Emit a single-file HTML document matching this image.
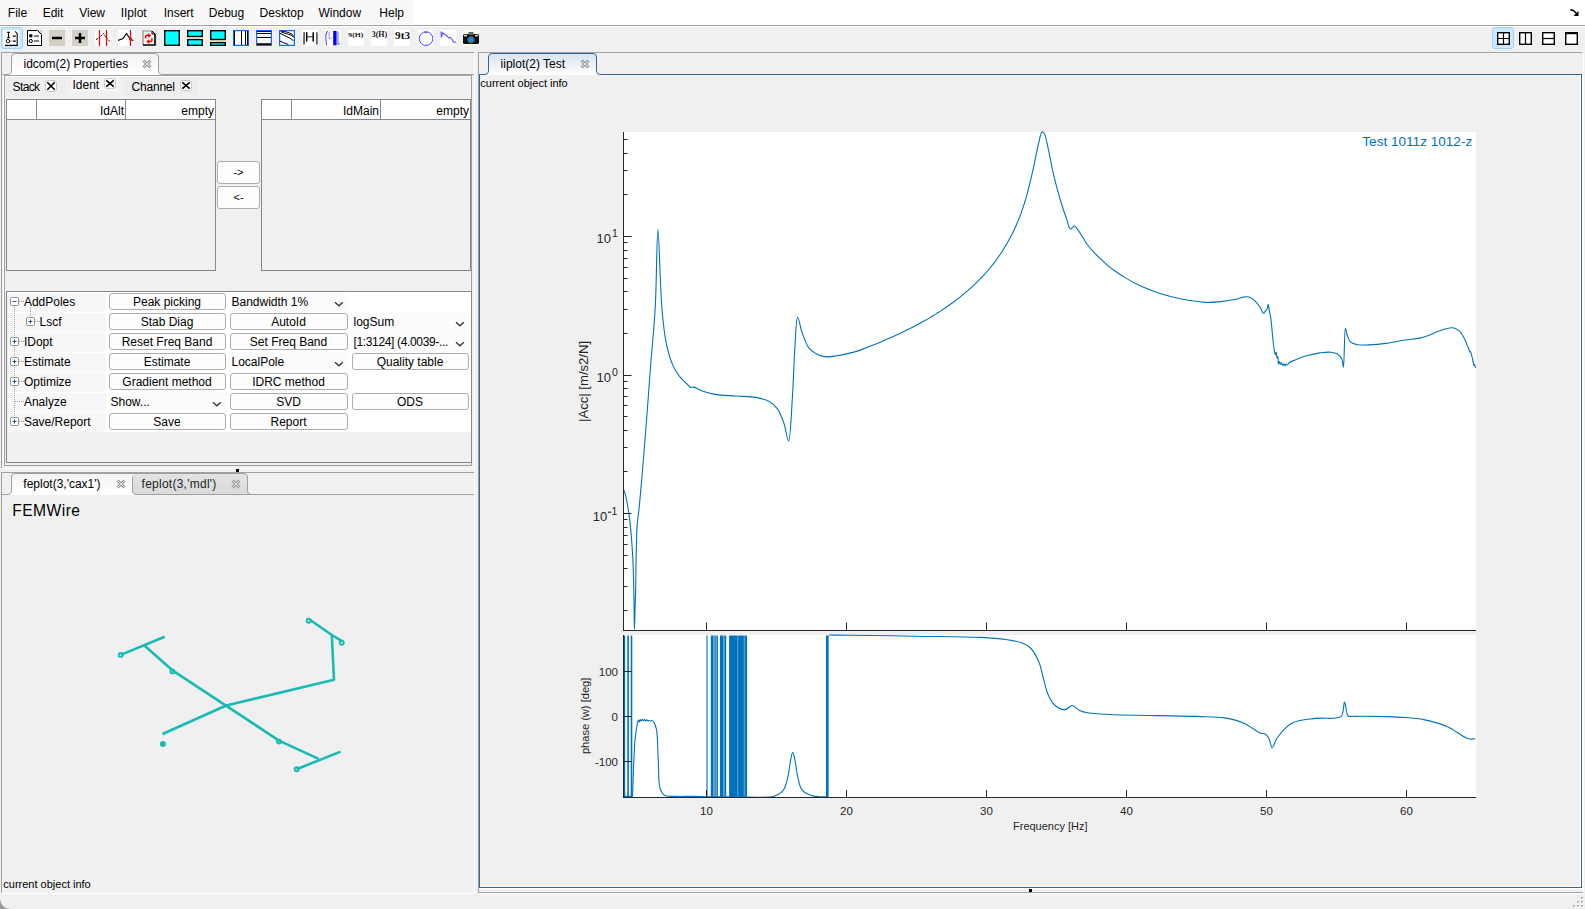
<!DOCTYPE html><html><head><meta charset="utf-8"><title>iiplot</title><style>
html,body{margin:0;padding:0}
body{width:1585px;height:909px;overflow:hidden;position:relative;background:#f0f0f0;font-family:"Liberation Sans",sans-serif;color:#000}
.a{position:absolute;box-sizing:border-box}
.t{position:absolute;white-space:nowrap;line-height:1}
.mi{position:absolute;top:5px;font-size:12px;line-height:14px}
.btn{position:absolute;box-sizing:border-box;border:1px solid #adadad;border-radius:3px;background:#fdfdfd;font-size:12px;text-align:center;line-height:14px;white-space:nowrap}
.cell{position:absolute;background:#f7f7f7}
.combo{position:absolute;font-size:12px;line-height:14px;white-space:nowrap}
.chev{position:absolute;width:6px;height:6px;border-right:1px solid #333;border-bottom:1px solid #333;transform:rotate(45deg)}
.xb{position:absolute;box-sizing:border-box;border:1px solid #c8c8c8;border-radius:3px;background:#fff}
</style></head><body>
<div class="a" style="left:0;top:0;width:1585px;height:25px;background:#fff"></div>
<div class="a" style="left:0;top:0;width:413px;height:24px;background:#f8f8f8"></div>
<div class="a" style="left:0;top:25px;width:1585px;height:1px;background:#a0a0a0"></div>
<div class="a" style="left:0;top:26px;width:1585px;height:1px;background:#fff"></div>
<div class="t" style="left:7.8px;top:6.64px;font-size:12px;">File</div>
<div class="t" style="left:42.7px;top:6.64px;font-size:12px;">Edit</div>
<div class="t" style="left:79.2px;top:6.64px;font-size:12px;">View</div>
<div class="t" style="left:120.7px;top:6.64px;font-size:12px;">IIplot</div>
<div class="t" style="left:163.7px;top:6.64px;font-size:12px;">Insert</div>
<div class="t" style="left:208.8px;top:6.64px;font-size:12px;">Debug</div>
<div class="t" style="left:259.6px;top:6.64px;font-size:12px;">Desktop</div>
<div class="t" style="left:318.4px;top:6.64px;font-size:12px;">Window</div>
<div class="t" style="left:379.3px;top:6.64px;font-size:12px;">Help</div>
<div class="a" style="left:1px;top:27px;width:22px;height:22px;background:#cce8ff;border:1px solid #99d1ff;border-radius:3px"></div>
<svg class="a" style="left:3px;top:30px;" width="16" height="16" viewBox="0 0 16 16"><rect width="16" height="16" fill="#fff"/><path d="M3.9,2.3H7.1M5.5,2.3V7.7M3.9,7.7H7.1" stroke="#000" stroke-width="1.1"/><path d="M9.9,6.1H12.8M9.9,11.1H12.8" stroke="#000" stroke-width="1.2"/><circle cx="4.9" cy="11.1" r="1.7" fill="none" stroke="#000" stroke-width="1"/><rect x="7.5" y="10.6" width="1" height="1" fill="#000"/><path d="M2,15.4H14.2V3.6L12.2,1.4" stroke="#000" stroke-width="1.1" fill="none"/></svg>
<svg class="a" style="left:26.8px;top:30px;" width="15" height="16" viewBox="0 0 15 16"><rect width="15" height="16" fill="#d4d0c8"/><path d="M0.5,15.5V0.5H10.5L14.5,4.5V15.5Z" fill="#fff" stroke="#000" stroke-width="1"/><circle cx="3.8" cy="5.8" r="1.8" fill="#000"/><circle cx="3.8" cy="11" r="1.6" fill="none" stroke="#000" stroke-width="1"/><path d="M7,6H12M7,11H12" stroke="#000" stroke-width="1.2"/></svg>
<svg class="a" style="left:48.9px;top:30px;" width="16" height="16" viewBox="0 0 16 16"><rect width="16" height="16" fill="#d4d0c8"/><path d="M3,8H13" stroke="#000" stroke-width="2.5"/></svg>
<svg class="a" style="left:71.9px;top:30px;" width="16" height="16" viewBox="0 0 16 16"><rect width="16" height="16" fill="#d4d0c8"/><path d="M3,8H13M8,3V13" stroke="#000" stroke-width="2.5"/></svg>
<svg class="a" style="left:95px;top:30px;" width="16" height="16" viewBox="0 0 16 16"><rect width="16" height="16" fill="#fff"/><path d="M1,9.5L4,8L8.5,3.5L11,7.5L15,11.5" stroke="#000" stroke-width="1" fill="none" stroke-dasharray="2,1"/><path d="M4.5,0V16M11.5,0V16" stroke="#f00" stroke-width="1.3"/></svg>
<svg class="a" style="left:118px;top:30px;" width="16" height="16" viewBox="0 0 16 16"><rect width="16" height="16" fill="#fff"/><path d="M0,10.5L5,8.5L8.5,3.5L12.5,9.5L15.5,10.5" stroke="#000" stroke-width="1.2" fill="none"/><path d="M12.5,0V16" stroke="#f00" stroke-width="1.3"/><circle cx="12.5" cy="9" r="1.5" fill="#f00"/></svg>
<svg class="a" style="left:141.7px;top:30px;" width="15" height="16" viewBox="0 0 15 16"><rect x="11" y="0" width="4" height="16" fill="#e6e2d8"/><path d="M1,15V1H10L13,4V15Z" fill="#f6f6f6"/><path d="M1,15V1H10" stroke="#8a8a8a" stroke-width="1.2" fill="none"/><path d="M1,15H13V4" stroke="#000" stroke-width="1.6" fill="none"/><path d="M10,1L13,4M10,1V4H13" stroke="#000" stroke-width="1" fill="none"/><path d="M3.6,8.6V6.4Q3.8,5.3 5,5.3H7" stroke="#f00" stroke-width="1.5" fill="none"/><path d="M6.3,3.1L9.3,5.5L6.3,7.7Z" fill="#f00"/><path d="M9.9,8.2V10.5Q9.8,11.5 8.6,11.5H6.5" stroke="#f00" stroke-width="1.5" fill="none"/><path d="M7.2,9.3L4.2,11.6L7.2,13.9Z" fill="#f00"/></svg>
<svg class="a" style="left:164px;top:30px;" width="16" height="16" viewBox="0 0 16 16"><rect x="0.7" y="0.7" width="14.6" height="14.6" fill="#0ff" stroke="#000" stroke-width="1.4"/></svg>
<svg class="a" style="left:186.8px;top:30px;" width="16" height="16" viewBox="0 0 16 16"><rect width="16" height="16" fill="#fff"/><rect x="0" y="7" width="16" height="2.5" fill="#fffacd"/><rect x="0.7" y="0.7" width="14.6" height="5.8" fill="#0ff" stroke="#000" stroke-width="1.4"/><rect x="0.7" y="9.6" width="14.6" height="5.7" fill="#0ff" stroke="#000" stroke-width="1.4"/></svg>
<svg class="a" style="left:209.9px;top:30px;" width="16" height="16" viewBox="0 0 16 16"><rect width="16" height="16" fill="#fff"/><rect x="0" y="10" width="16" height="2.5" fill="#fffacd"/><rect x="0.7" y="0.7" width="14.6" height="8.8" fill="#0ff" stroke="#000" stroke-width="1.4"/><rect x="0.7" y="12.6" width="14.6" height="2.7" fill="#0ff" stroke="#000" stroke-width="1.4"/></svg>
<svg class="a" style="left:233px;top:30px;" width="16" height="16" viewBox="0 0 16 16"><rect x="0.6" y="0.6" width="14.8" height="14.8" fill="#fff" stroke="#0a6cff" stroke-width="1.2"/><path d="M1.5,1V15M8.5,1V15M12.5,1V15M14.5,1V15" stroke="#000" stroke-width="1"/></svg>
<svg class="a" style="left:256.1px;top:30px;" width="16" height="16" viewBox="0 0 16 16"><rect x="0.6" y="0.6" width="14.8" height="14.8" fill="#fff" stroke="#0a6cff" stroke-width="1.2"/><path d="M1,1.5H15M1,3.5H15M1,7.5H15M1,14.5H15" stroke="#000" stroke-width="1"/><path d="M1,14H15" stroke="#000" stroke-width="1.5"/></svg>
<svg class="a" style="left:279.2px;top:30px;" width="16" height="16" viewBox="0 0 16 16"><rect x="0.6" y="0.6" width="14.8" height="14.8" fill="#fff" stroke="#0a6cff" stroke-width="1.2"/><g stroke="#000" stroke-width="1" fill="none"><path d="M1.6,1.1Q5.5,1.2 9.9,2.7T14.6,6.6"/><path d="M2.5,2.2Q7.7,3.8 12.5,5.3L14.6,7.4"/><path d="M0.7,3.1Q5.5,5.7 11.2,8.3L14.6,10.9"/><path d="M0.7,10.9L4.6,12.7L9.4,14.4"/></g></svg>
<svg class="a" style="left:302.2px;top:30px;" width="16" height="16" viewBox="0 0 16 16"><rect width="16" height="16" fill="#fff"/><path d="M2.1,2.2L2,14.4M14.9,2.2V14.4" stroke="#000" stroke-width="1.1"/><path d="M4.7,2.2V11.4M11.2,2.2V11.4" stroke="#000" stroke-width="1.5"/><path d="M4.7,6.8H11.2" stroke="#222" stroke-width="1"/></svg>
<svg class="a" style="left:325.3px;top:30px;" width="16" height="16" viewBox="0 0 16 16"><rect width="16" height="16" fill="#fff"/><path d="M2.5,0.9Q0.6,4 0.8,7Q1,11 1.6,15.3" stroke="#55f" stroke-width="1.1" fill="none"/><path d="M4.2,1.8V8.3H6.9" stroke="#8888ff" stroke-width="1" fill="none"/><rect x="8.2" y="0.9" width="3.4" height="14.4" fill="#00f"/><path d="M13,1.4V14.4L15.1,13.5" stroke="#66f" stroke-width="1.1" fill="none"/></svg>
<svg class="a" style="left:348px;top:30px;" width="16" height="16" viewBox="0 0 16 16"><rect width="16" height="16" fill="#fff"/><text x="0.3" y="6.8" font-family="Liberation Serif" font-size="7" font-weight="bold" fill="#111" textLength="15" lengthAdjust="spacingAndGlyphs">9(H)</text></svg>
<svg class="a" style="left:371.1px;top:30px;" width="16" height="16" viewBox="0 0 16 16"><rect width="16" height="16" fill="#fff"/><text x="0.7" y="7.2" font-family="Liberation Serif" font-size="7.5" font-weight="bold" fill="#111" textLength="15.4" lengthAdjust="spacingAndGlyphs">3(H)</text></svg>
<svg class="a" style="left:394.2px;top:30px;" width="16" height="16" viewBox="0 0 16 16"><rect width="16" height="16" fill="#fff"/><text x="1.1" y="8.9" font-family="Liberation Serif" font-weight="bold" font-size="9.5" fill="#111" textLength="14.9" lengthAdjust="spacingAndGlyphs">9t3</text></svg>
<svg class="a" style="left:416.9px;top:30px;" width="16" height="16" viewBox="0 0 16 16"><rect width="16" height="16" fill="#fff"/><circle cx="9" cy="8.6" r="6.8" fill="none" stroke="#44f" stroke-width="1"/><path d="M7.5,2Q9,4 10.5,2" stroke="#44f" stroke-width="1" fill="none"/></svg>
<svg class="a" style="left:439.9px;top:30px;" width="16" height="16" viewBox="0 0 16 16"><rect width="16" height="16" fill="#fff"/><path d="M0.9,1.4L1.4,7.4L2.6,2.8L4.8,4.5L7.1,5.7L8.3,7.9L10,7.4L12.2,9.6L13.4,11.9L15.9,12.5" stroke="#55f" stroke-width="1.1" fill="none"/></svg>
<svg class="a" style="left:462.9px;top:30px;" width="16" height="16" viewBox="0 0 16 16"><rect width="16" height="16" fill="#fffbea"/><rect x="0" y="4" width="16" height="10" rx="1.5" fill="#111"/><rect x="5.5" y="2" width="5" height="3" fill="#666"/><circle cx="8" cy="9.8" r="3.2" fill="#1c8ad6" stroke="#555" stroke-width="1"/><rect x="1" y="4.8" width="3" height="1.6" fill="#ddd"/><rect x="12" y="4.8" width="3" height="1.6" fill="#ddd"/></svg>
<div class="a" style="left:1492px;top:27px;width:22px;height:22px;background:#cce8ff;border:1px solid #99d1ff;border-radius:3px"></div>
<svg class="a" style="left:1497px;top:32px;" width="14" height="14" viewBox="0 0 14 14"><rect x="0.7" y="0.7" width="11.6" height="11.6" fill="#fff" stroke="#000" stroke-width="1.4"/><path d="M6.5,1V12.5M1,6.5H12.5" stroke="#000" stroke-width="1.2"/></svg>
<svg class="a" style="left:1519px;top:32px;" width="14" height="14" viewBox="0 0 14 14"><rect x="0.7" y="0.7" width="11.6" height="11.6" fill="#fff" stroke="#000" stroke-width="1.4"/><path d="M6.5,1V12.5" stroke="#000" stroke-width="1.2"/></svg>
<svg class="a" style="left:1542px;top:32px;" width="14" height="14" viewBox="0 0 14 14"><rect x="0.7" y="0.7" width="11.6" height="11.6" fill="#fff" stroke="#000" stroke-width="1.4"/><path d="M1,6.5H12.5" stroke="#000" stroke-width="1.2"/></svg>
<svg class="a" style="left:1565px;top:32px;" width="14" height="14" viewBox="0 0 14 14"><rect x="0.7" y="0.7" width="11.6" height="11.6" fill="#fff" stroke="#000" stroke-width="1.4"/><path d="M1,1.3H12.5" stroke="#000" stroke-width="1.8"/></svg>
<svg class="a" style="left:1569px;top:8px;" width="11" height="9" viewBox="0 0 11 9"><path d="M1.5,2.5Q3,1 5,3L8.5,6.5" stroke="#000" stroke-width="1.5" fill="none"/><path d="M9.5,3V8H4.5Z" fill="#000"/></svg>
<div class="a" style="left:1px;top:52px;width:473px;height:1px;background:#a0a0a0"></div>
<div class="a" style="left:1px;top:52px;width:1px;height:417px;background:#a0a0a0"></div>
<div class="a" style="left:474px;top:52px;width:1px;height:417px;background:#fff"></div>
<div class="a" style="left:1px;top:468px;width:474px;height:1px;background:#fff"></div>
<svg class="a" style="left:0;top:51px" width="476" height="26" viewBox="0 51 476 26"><defs><linearGradient id="tg1" x1="0" y1="0" x2="0" y2="1"><stop offset="0" stop-color="#f3f3f5"/><stop offset="1" stop-color="#ffffff"/></linearGradient></defs><path d="M8,75 Q11.5,75 11.5,71 V57 Q11.5,53.5 15,53.5 H155 Q158.5,53.5 158.5,57 V71 Q158.5,75 162,75 Z" fill="url(#tg1)"/><path d="M2,74.5 H8 Q11.5,74.5 11.5,71 V57 Q11.5,53.5 15,53.5 H155 Q158.5,53.5 158.5,57 V71 Q158.5,74.5 162,74.5 H474" fill="none" stroke="#a0a0a0" stroke-width="1"/></svg>
<div class="t" style="left:23.5px;top:58.34px;font-size:12px;">idcom(2) Properties</div>
<svg class="a" style="left:141.8px;top:58.8px" width="10" height="10"><path d="M1.5,1.5L8.5,8.5M8.5,1.5L1.5,8.5" stroke="#969696" stroke-width="2.9" fill="none"/><path d="M1.5,1.5L8.5,8.5M8.5,1.5L1.5,8.5" stroke="#f4f4f4" stroke-width="0.9" fill="none"/></svg>
<div class="a" style="left:4px;top:75px;width:1px;height:391px;background:#a0a0a0"></div>
<div class="a" style="left:4px;top:465px;width:468px;height:1px;background:#a0a0a0"></div>
<div class="a" style="left:471px;top:75px;width:1px;height:391px;background:#a0a0a0"></div>
<div class="a" style="left:3px;top:75px;width:1px;height:391px;background:#fff"></div>
<div class="a" style="left:4px;top:75px;width:468px;height:1px;background:#a0a0a0"></div>
<div class="a" style="left:5px;top:76px;width:466px;height:1px;background:#fff"></div>
<div class="a" style="left:6px;top:77px;width:59px;height:19px;background:#ededed"></div>
<div class="a" style="left:71px;top:77px;width:48px;height:15px;background:#f5f5f5"></div>
<div class="a" style="left:125px;top:77px;width:73px;height:19px;background:#ededed"></div>
<div class="t" style="left:12.5px;top:80.64px;font-size:12px;letter-spacing:-0.6px">Stack</div>
<div class="t" style="left:72.5px;top:78.74px;font-size:12px;">Ident</div>
<div class="t" style="left:131.5px;top:80.84px;font-size:12px;letter-spacing:-0.2px">Channel</div>
<div class="xb" style="left:45px;top:80px;width:12px;height:12px"></div>
<svg class="a" style="left:45px;top:80px" width="12" height="12"><path d="M2.3,2.3L9.7,9.7M9.7,2.3L2.3,9.7" stroke="#000" stroke-width="1.6"/></svg>
<div class="xb" style="left:104px;top:78px;width:12px;height:11px"></div>
<svg class="a" style="left:104px;top:78px" width="12" height="11"><path d="M2.3,2.3L9.7,8.7M9.7,2.3L2.3,8.7" stroke="#000" stroke-width="1.6"/></svg>
<div class="xb" style="left:180px;top:80px;width:12px;height:11px"></div>
<svg class="a" style="left:180px;top:80px" width="12" height="11"><path d="M2.3,2.3L9.7,8.7M9.7,2.3L2.3,8.7" stroke="#000" stroke-width="1.6"/></svg>
<div class="a" style="left:6px;top:99px;width:210px;height:172px;border:1px solid #828790;background:#f0f0f0"></div>
<div class="a" style="left:7px;top:100px;width:208px;height:19px;background:#fff"></div>
<div class="a" style="left:6px;top:119px;width:210px;height:1px;background:#828790"></div>
<div class="a" style="left:36px;top:99px;width:1px;height:21px;background:#828790"></div>
<div class="a" style="left:125px;top:99px;width:1px;height:21px;background:#828790"></div>
<div class="t" style="left:37px;top:104.64px;width:87px;text-align:right;font-size:12px">IdAlt</div>
<div class="t" style="left:126px;top:104.64px;width:88px;text-align:right;font-size:12px">empty</div>
<div class="a" style="left:261px;top:99px;width:210px;height:172px;border:1px solid #828790;background:#f0f0f0"></div>
<div class="a" style="left:262px;top:100px;width:208px;height:19px;background:#fff"></div>
<div class="a" style="left:261px;top:119px;width:210px;height:1px;background:#828790"></div>
<div class="a" style="left:291px;top:99px;width:1px;height:21px;background:#828790"></div>
<div class="a" style="left:380px;top:99px;width:1px;height:21px;background:#828790"></div>
<div class="t" style="left:292px;top:104.64px;width:87px;text-align:right;font-size:12px">IdMain</div>
<div class="t" style="left:381px;top:104.64px;width:88px;text-align:right;font-size:12px">empty</div>
<div class="btn" style="left:217px;top:161px;width:43px;height:23px;line-height:21px;font-size:11px">-&gt;</div>
<div class="btn" style="left:217px;top:186px;width:43px;height:23px;line-height:21px;font-size:11px">&lt;-</div>
<div class="a" style="left:6px;top:291px;width:466px;height:172px;border:1px solid #828790;background:#f0f0f0"></div>
<div class="a" style="left:7px;top:292px;width:464px;height:1px;background:#fff"></div>
<div class="a" style="left:8px;top:293px;width:463px;height:139px;background:#fff"></div>
<div class="cell" style="left:8px;top:293px;width:98px;height:19px"></div>
<div class="cell" style="left:8px;top:313px;width:98px;height:19px"></div>
<div class="cell" style="left:8px;top:333px;width:98px;height:19px"></div>
<div class="cell" style="left:8px;top:353px;width:98px;height:19px"></div>
<div class="cell" style="left:8px;top:373px;width:98px;height:19px"></div>
<div class="cell" style="left:8px;top:393px;width:98px;height:19px"></div>
<div class="cell" style="left:8px;top:413px;width:98px;height:19px"></div>
<div class="t" style="left:23.9px;top:296.14px;font-size:12px;">AddPoles</div>
<div class="btn" style="left:108.5px;top:293px;width:117px;height:17px;line-height:15px;padding-top:0.8px">Peak picking</div>
<div class="a" style="left:228.5px;top:293px;width:119px;height:19px;background:#fbfbfb"></div>
<div class="t" style="left:231.5px;top:296.34px;font-size:12px;">Bandwidth 1%</div>
<svg class="a" style="left:334px;top:301px" width="10" height="6"><path d="M1,1.2L4.9,4.8L8.8,1.2" stroke="#333" stroke-width="1.3" fill="none"/></svg>
<div class="t" style="left:39.6px;top:316.14px;font-size:12px;">Lscf</div>
<div class="btn" style="left:108.5px;top:313px;width:117px;height:17px;line-height:15px;padding-top:0.8px">Stab Diag</div>
<div class="btn" style="left:229.5px;top:313px;width:118px;height:17px;line-height:15px;padding-top:0.8px">AutoId</div>
<div class="a" style="left:350.5px;top:313px;width:118px;height:19px;background:#fbfbfb"></div>
<div class="t" style="left:353.5px;top:316.34px;font-size:12px;">logSum</div>
<svg class="a" style="left:455px;top:321px" width="10" height="6"><path d="M1,1.2L4.9,4.8L8.8,1.2" stroke="#333" stroke-width="1.3" fill="none"/></svg>
<div class="t" style="left:23.9px;top:336.14px;font-size:12px;">IDopt</div>
<div class="btn" style="left:108.5px;top:333px;width:117px;height:17px;line-height:15px;padding-top:0.8px">Reset Freq Band</div>
<div class="btn" style="left:229.5px;top:333px;width:118px;height:17px;line-height:15px;padding-top:0.8px">Set Freq Band</div>
<div class="a" style="left:350.5px;top:333px;width:118px;height:19px;background:#fbfbfb"></div>
<div class="t" style="left:353.5px;top:336.34px;font-size:12px;letter-spacing:-0.35px">[1:3124] (4.0039-...</div>
<svg class="a" style="left:455px;top:341px" width="10" height="6"><path d="M1,1.2L4.9,4.8L8.8,1.2" stroke="#333" stroke-width="1.3" fill="none"/></svg>
<div class="t" style="left:23.9px;top:356.14px;font-size:12px;">Estimate</div>
<div class="btn" style="left:108.5px;top:353px;width:117px;height:17px;line-height:15px;padding-top:0.8px">Estimate</div>
<div class="a" style="left:228.5px;top:353px;width:119px;height:19px;background:#fbfbfb"></div>
<div class="t" style="left:231.5px;top:356.34px;font-size:12px;">LocalPole</div>
<svg class="a" style="left:334px;top:361px" width="10" height="6"><path d="M1,1.2L4.9,4.8L8.8,1.2" stroke="#333" stroke-width="1.3" fill="none"/></svg>
<div class="btn" style="left:351.5px;top:353px;width:117px;height:17px;line-height:15px;padding-top:0.8px">Quality table</div>
<div class="t" style="left:23.9px;top:376.14px;font-size:12px;">Optimize</div>
<div class="btn" style="left:108.5px;top:373px;width:117px;height:17px;line-height:15px;padding-top:0.8px">Gradient method</div>
<div class="btn" style="left:229.5px;top:373px;width:118px;height:17px;line-height:15px;padding-top:0.8px">IDRC method</div>
<div class="t" style="left:23.9px;top:396.14px;font-size:12px;">Analyze</div>
<div class="a" style="left:107.5px;top:393px;width:118px;height:19px;background:#fbfbfb"></div>
<div class="t" style="left:110.5px;top:396.34px;font-size:12px;">Show...</div>
<svg class="a" style="left:212px;top:401px" width="10" height="6"><path d="M1,1.2L4.9,4.8L8.8,1.2" stroke="#333" stroke-width="1.3" fill="none"/></svg>
<div class="btn" style="left:229.5px;top:393px;width:118px;height:17px;line-height:15px;padding-top:0.8px">SVD</div>
<div class="btn" style="left:351.5px;top:393px;width:117px;height:17px;line-height:15px;padding-top:0.8px">ODS</div>
<div class="t" style="left:23.9px;top:416.14px;font-size:12px;">Save/Report</div>
<div class="btn" style="left:108.5px;top:413px;width:117px;height:17px;line-height:15px;padding-top:0.8px">Save</div>
<div class="btn" style="left:229.5px;top:413px;width:118px;height:17px;line-height:15px;padding-top:0.8px">Report</div>
<svg class="a" style="left:8px;top:293px" width="100" height="140"><g stroke="#a0a0a0" stroke-width="1" stroke-dasharray="1,1" fill="none"><path d="M6.5,14V128M11,8.5H16M6.5,8.5H6.5M22.5,14V28.5M27,28.5H32M11,48.5H16M11,68.5H16M11,88.5H16M7,108.5H16M11,128.5H16"/></g><g fill="#fff" stroke="#919191"><rect x="2.5" y="4.5" width="8" height="8" rx="1"/><rect x="18.5" y="24.5" width="8" height="8" rx="1"/><rect x="2.5" y="44.5" width="8" height="8" rx="1"/><rect x="2.5" y="64.5" width="8" height="8" rx="1"/><rect x="2.5" y="84.5" width="8" height="8" rx="1"/><rect x="2.5" y="124.5" width="8" height="8" rx="1"/></g><g stroke="#2c4c8c" stroke-width="1"><path d="M4.5,8.5H8.5M20.5,28.5H24.5M22.5,26.5V30.5M4.5,48.5H8.5M6.5,46.5V50.5M4.5,68.5H8.5M6.5,66.5V70.5M4.5,88.5H8.5M6.5,86.5V90.5M4.5,128.5H8.5M6.5,126.5V130.5"/></g></svg>
<div class="a" style="left:236px;top:469px;width:3px;height:3px;background:#000"></div>
<div class="a" style="left:1px;top:472px;width:473px;height:1px;background:#a0a0a0"></div>
<div class="a" style="left:1px;top:472px;width:1px;height:421px;background:#a0a0a0"></div>
<div class="a" style="left:474px;top:472px;width:1px;height:421px;background:#fff"></div>
<div class="a" style="left:1px;top:893px;width:474px;height:1px;background:#fff"></div>
<svg class="a" style="left:0;top:470px" width="474" height="28" viewBox="0 470 474 28"><defs><linearGradient id="gsel" x1="0" y1="0" x2="0" y2="1"><stop offset="0" stop-color="#f3f3f5"/><stop offset="1" stop-color="#fff"/></linearGradient><linearGradient id="gun" x1="0" y1="0" x2="0" y2="1"><stop offset="0" stop-color="#e3e3e3"/><stop offset="1" stop-color="#dadada"/></linearGradient></defs><path fill="url(#gun)" d="M132.5,477 Q132.5,473.5 136,473.5 H244 Q247.5,473.5 247.5,477 V491 Q247.5,494.5 251,494.5 H136 Q132.5,494.5 132.5,491 Z"/><path fill="url(#gsel)" d="M8,495 Q11.5,495 11.5,491 V477 Q11.5,473.5 15,473.5 H129 Q132.5,473.5 132.5,477 V491 Q132.5,495 136,495 Z"/><path fill="none" stroke="#a0a0a0" d="M2,494.5 H8 Q11.5,494.5 11.5,491 V477 Q11.5,473.5 15,473.5 H244 Q247.5,473.5 247.5,477 V491 Q247.5,494.5 251,494.5 H474 M132.5,477 V491 Q132.5,494.5 136,494.5 H251"/></svg>
<div class="t" style="left:23.3px;top:478.44px;font-size:12px;">feplot(3,'cax1')</div>
<div class="t" style="left:141.6px;top:478.44px;font-size:12px;color:#222;letter-spacing:0.25px">feplot(3,'mdl')</div>
<svg class="a" style="left:115.8px;top:478.8px" width="10" height="10"><path d="M1.5,1.5L8.5,8.5M8.5,1.5L1.5,8.5" stroke="#969696" stroke-width="2.9" fill="none"/><path d="M1.5,1.5L8.5,8.5M8.5,1.5L1.5,8.5" stroke="#f4f4f4" stroke-width="0.9" fill="none"/></svg>
<svg class="a" style="left:230.8px;top:478.8px" width="10" height="10"><path d="M1.5,1.5L8.5,8.5M8.5,1.5L1.5,8.5" stroke="#969696" stroke-width="2.9" fill="none"/><path d="M1.5,1.5L8.5,8.5M8.5,1.5L1.5,8.5" stroke="#f4f4f4" stroke-width="0.9" fill="none"/></svg>
<div class="t" style="left:12.3px;top:502.69px;font-size:15.6px;letter-spacing:0.45px">FEMWire</div>
<div class="t" style="left:3.3px;top:879.39px;font-size:11px;">current object info</div>
<svg class="a" style="left:0;top:495px" width="474" height="398" viewBox="0 495 474 398"><g stroke="#18bab5" stroke-width="2.6" fill="none" stroke-linecap="butt" stroke-linejoin="round"><path d="M120.7,654.9L164.7,636.8"/><path d="M143.8,645L172.4,670.3L279,740.6L318.6,758.9"/><path d="M296.6,769.2L340.6,751.6"/><path d="M162.5,734L226.2,705.5L334,679.7L331.8,635L309.8,619.7"/><path d="M331.8,635L342.8,641.7"/></g><g stroke="#18bab5" stroke-width="1.9" fill="none"><circle cx="120.7" cy="654.9" r="2"/><circle cx="172.4" cy="671.4" r="2"/><circle cx="279" cy="741.6" r="2"/><circle cx="296.6" cy="769.2" r="2"/><circle cx="308.7" cy="620.8" r="2"/><circle cx="341.7" cy="642.8" r="2"/></g><circle cx="162.9" cy="744" r="3" fill="#18bab5"/></svg>
<div class="a" style="left:478px;top:52px;width:1104px;height:1px;background:#a0a0a0"></div>
<div class="a" style="left:478px;top:52px;width:1px;height:841px;background:#a0a0a0"></div>
<div class="a" style="left:1583px;top:52px;width:1px;height:841px;background:#fff"></div>
<div class="a" style="left:478px;top:892px;width:1105px;height:1px;background:#a0a0a0"></div>
<div class="a" style="left:478px;top:893px;width:1105px;height:1px;background:#fff"></div>
<div class="a" style="left:479px;top:74px;width:1103px;height:814px;border:1px solid #33649c;border-top:none"></div>
<div class="a" style="left:480px;top:75px;width:1101px;height:812px;border:1px solid #fff;border-top:none;border-left:none"></div>
<div class="a" style="left:1582px;top:74px;width:1px;height:815px;background:#fff"></div>
<div class="a" style="left:479px;top:888px;width:1104px;height:1px;background:#fff"></div>
<svg class="a" style="left:0;top:51px" width="1584" height="26" viewBox="0 51 1584 26"><defs><linearGradient id="tg2" x1="0" y1="0" x2="0" y2="1"><stop offset="0" stop-color="#d8e2ec"/><stop offset="1" stop-color="#ffffff"/></linearGradient></defs><path d="M485,75 Q488.5,75 488.5,71 V57 Q488.5,53.5 492,53.5 H593 Q596.5,53.5 596.5,57 V71 Q596.5,75 600,75 Z" fill="url(#tg2)"/><path d="M479,74.5 H485 Q488.5,74.5 488.5,71 V57 Q488.5,53.5 492,53.5 H593 Q596.5,53.5 596.5,57 V71 Q596.5,74.5 600,74.5 H1582" fill="none" stroke="#33649c" stroke-width="1"/></svg>
<div class="t" style="left:500.6px;top:58.34px;font-size:12px;">iiplot(2) Test</div>
<svg class="a" style="left:579.8px;top:58.8px" width="10" height="10"><path d="M1.5,1.5L8.5,8.5M8.5,1.5L1.5,8.5" stroke="#969696" stroke-width="2.9" fill="none"/><path d="M1.5,1.5L8.5,8.5M8.5,1.5L1.5,8.5" stroke="#f4f4f4" stroke-width="0.9" fill="none"/></svg>
<div class="t" style="left:480.3px;top:78.49px;font-size:11px;">current object info</div>
<svg class="a" style="left:0;top:0" width="1585" height="909" viewBox="0 0 1585 909"><rect x="623" y="132" width="853" height="498.5" fill="#fff"/><rect x="623" y="635" width="853" height="162" fill="#fff"/><path d="M623.5,489.6 C623.9,490.5 624.3,491.1 624.7,492.4 C625.6,495.1 626.7,500.4 627.5,505.0 C628.5,510.3 629.2,515.6 630.0,522.4 C631.1,532.1 632.1,545.6 632.8,557.9 C633.5,571.3 633.7,587.2 634.0,600.0 C634.2,610.7 634.2,629.5 634.4,629.5 C634.6,629.5 634.8,616.4 635.0,610.0 C635.2,603.8 635.4,599.6 635.6,591.6 C636.0,576.5 636.1,540.8 637.1,526.1 C637.6,518.7 638.3,516.1 639.0,509.3 C640.1,498.6 641.4,482.9 642.7,468.0 C644.2,450.3 645.9,428.3 647.3,410.0 C648.6,393.6 649.5,379.4 650.8,363.2 C652.2,345.6 654.1,328.0 655.2,308.0 C656.6,284.1 656.8,229.3 657.9,229.3 C659.0,229.3 660.1,287.0 661.9,308.0 C663.1,322.1 664.1,333.0 666.3,343.3 C668.0,351.6 670.3,359.4 672.9,365.4 C674.9,369.8 677.0,373.2 679.5,376.4 C681.8,379.3 685.0,382.0 687.0,384.0 C688.4,385.4 689.2,387.0 690.5,387.4 C691.5,387.8 692.5,386.9 693.8,387.1 C695.9,387.5 698.6,389.7 701.6,390.8 C705.4,392.2 709.8,393.5 714.8,394.4 C721.0,395.5 729.2,395.5 736.2,396.0 C742.9,396.5 750.1,396.3 756.0,397.4 C760.9,398.3 765.5,399.4 769.2,401.5 C772.5,403.4 775.2,405.7 777.5,408.9 C780.3,412.8 782.3,418.6 784.1,423.8 C786.0,429.3 787.3,441.2 788.5,441.1 C790.4,441.0 791.3,413.6 792.3,399.0 C793.4,383.2 793.8,364.2 794.8,349.5 C795.6,337.6 796.0,317.5 797.6,317.3 C798.8,317.2 800.3,327.9 802.2,333.0 C804.1,338.1 806.2,344.4 808.8,347.9 C810.7,350.3 812.8,351.6 815.0,353.0 C817.2,354.3 819.7,355.5 822.0,356.1 C824.1,356.7 826.1,356.9 828.3,356.9 C830.9,356.9 833.6,356.3 836.5,355.8 C839.9,355.2 843.9,354.4 847.5,353.6 C851.1,352.8 855.0,351.8 858.0,350.9 C860.3,350.2 862.0,349.5 864.0,348.7 C866.0,347.9 868.0,347.1 870.0,346.3 C872.0,345.5 874.0,344.7 876.0,343.9 C878.0,343.1 880.0,342.2 882.0,341.4 C884.0,340.5 886.0,339.7 888.0,338.8 C890.0,337.9 892.0,337.1 894.0,336.2 C896.0,335.3 898.0,334.3 900.0,333.4 C902.0,332.4 904.0,331.5 906.0,330.5 C908.0,329.5 910.0,328.5 912.0,327.5 C914.0,326.5 916.0,325.4 918.0,324.3 C920.0,323.2 922.0,322.1 924.0,321.0 C926.0,319.9 928.0,318.8 930.0,317.6 C932.0,316.4 934.0,315.1 936.0,313.9 C938.0,312.6 940.0,311.4 942.0,310.1 C944.0,308.8 946.0,307.4 948.0,306.0 C950.0,304.6 952.0,303.2 954.0,301.7 C956.0,300.2 958.0,298.7 960.0,297.1 C962.0,295.5 964.0,293.9 966.0,292.2 C968.0,290.5 970.0,288.7 972.0,286.9 C974.0,285.1 976.0,283.2 978.0,281.2 C980.0,279.2 982.0,277.1 984.0,274.9 C986.0,272.7 988.0,270.4 990.0,268.0 C992.0,265.5 994.0,263.0 996.0,260.3 C998.0,257.5 999.9,254.9 1002.0,251.7 C1004.5,247.7 1007.6,242.6 1010.0,238.1 C1012.2,233.9 1014.2,229.9 1016.0,225.7 C1017.8,221.6 1019.4,217.7 1021.0,213.4 C1022.8,208.6 1024.3,204.0 1026.0,198.2 C1028.2,190.5 1030.6,180.4 1032.7,171.2 C1034.9,161.7 1037.0,149.2 1038.9,142.0 C1040.0,137.7 1040.7,132.4 1042.0,131.9 C1042.7,131.7 1043.6,132.5 1044.3,133.5 C1045.9,135.8 1046.8,142.5 1048.1,148.1 C1049.8,155.5 1051.4,165.6 1053.5,174.3 C1055.6,183.1 1058.1,192.6 1060.5,200.5 C1062.5,207.2 1064.7,213.8 1066.6,219.0 C1068.0,222.9 1068.8,228.6 1070.5,229.0 C1071.6,229.3 1073.0,225.9 1074.3,226.0 C1075.9,226.1 1077.3,229.2 1079.0,231.4 C1081.4,234.6 1084.0,240.0 1086.7,243.7 C1089.2,247.1 1092.0,250.3 1094.4,252.9 C1096.4,255.0 1097.7,256.2 1100.0,258.3 C1103.4,261.5 1108.7,266.4 1113.2,269.8 C1117.5,273.0 1121.9,275.7 1126.4,278.4 C1130.7,281.0 1135.1,283.5 1139.6,285.6 C1143.9,287.6 1148.4,289.3 1152.8,290.9 C1157.2,292.5 1161.6,293.9 1166.0,295.2 C1170.4,296.5 1174.8,297.6 1179.2,298.5 C1183.6,299.4 1188.0,300.1 1192.4,300.8 C1196.8,301.4 1200.9,302.2 1205.5,302.4 C1210.4,302.6 1215.8,302.1 1220.9,301.6 C1226.0,301.1 1231.9,300.2 1236.3,299.3 C1239.6,298.6 1242.4,297.1 1245.0,296.9 C1247.0,296.7 1248.7,296.7 1250.4,297.4 C1252.3,298.2 1254.2,300.2 1255.8,301.8 C1257.3,303.3 1258.6,305.0 1259.8,306.8 C1261.1,308.8 1262.1,313.0 1263.3,313.2 C1264.1,313.3 1265.0,311.5 1265.7,310.7 C1266.3,310.0 1266.8,309.6 1267.2,308.8 C1267.7,307.7 1267.9,304.3 1268.2,304.3 C1268.6,304.3 1268.8,307.8 1269.2,309.8 C1269.6,312.2 1270.3,315.0 1270.7,317.7 C1271.1,320.6 1271.4,323.5 1271.7,326.6 C1272.1,330.0 1272.3,333.8 1272.7,337.5 C1273.1,341.4 1273.6,346.2 1274.2,349.4 C1274.6,351.6 1275.1,355.0 1275.5,355.0 C1275.8,355.0 1276.1,352.0 1276.3,352.0 C1276.6,352.0 1276.6,357.9 1277.0,358.0 C1277.2,358.0 1277.6,356.5 1277.8,356.5 C1278.3,356.6 1278.1,363.9 1278.5,364.0 C1278.8,364.0 1279.2,361.5 1279.5,361.5 C1279.8,361.5 1280.1,364.4 1280.5,364.5 C1280.8,364.5 1281.2,362.8 1281.6,362.8 C1282.0,362.8 1282.4,365.5 1282.8,365.5 C1283.2,365.5 1283.6,363.8 1284.0,363.8 C1284.4,363.8 1284.6,366.0 1285.0,366.0 C1285.4,366.0 1285.8,364.1 1286.3,364.0 C1286.7,363.9 1287.1,364.9 1287.5,364.8 C1288.1,364.7 1288.6,363.2 1289.5,362.5 C1290.7,361.6 1292.5,361.0 1294.5,360.2 C1297.6,358.9 1302.4,357.0 1306.5,355.8 C1310.8,354.6 1315.5,353.5 1319.8,352.9 C1323.7,352.4 1328.0,351.8 1331.2,352.2 C1333.6,352.5 1335.6,352.9 1337.4,354.0 C1339.2,355.1 1340.8,356.9 1341.8,358.9 C1342.9,361.2 1342.9,367.3 1343.4,367.3 C1344.4,367.2 1344.2,328.5 1345.4,328.4 C1345.9,328.4 1346.3,332.8 1347.1,335.0 C1348.0,337.4 1348.9,340.5 1350.7,342.1 C1352.5,343.7 1355.1,344.2 1357.7,344.7 C1360.8,345.3 1364.3,345.0 1368.3,344.9 C1373.5,344.7 1380.1,344.2 1386.0,343.4 C1391.9,342.6 1397.9,341.2 1403.7,340.3 C1409.2,339.4 1415.6,339.0 1420.0,338.1 C1423.1,337.4 1425.0,336.8 1427.7,335.8 C1430.8,334.7 1434.4,332.8 1437.7,331.6 C1440.8,330.4 1444.2,329.1 1446.9,328.5 C1448.9,328.0 1450.8,327.6 1452.3,327.7 C1453.5,327.8 1454.3,328.0 1455.4,328.5 C1456.8,329.1 1458.7,330.3 1460.0,331.6 C1461.3,332.9 1462.1,334.5 1463.1,336.2 C1464.2,338.1 1465.4,340.4 1466.2,342.3 C1466.8,343.8 1467.0,345.6 1467.5,346.5 C1467.8,347.0 1468.2,347.0 1468.5,347.5 C1469.0,348.4 1469.1,351.8 1469.6,352.0 C1469.9,352.1 1470.2,351.4 1470.5,351.5 C1471.0,351.7 1471.2,354.0 1471.6,355.4 C1472.0,356.9 1472.4,358.4 1472.8,360.0 C1473.2,361.7 1473.4,365.3 1473.9,365.4 C1474.1,365.4 1474.4,364.5 1474.6,364.5 C1475.0,364.6 1475.2,366.9 1475.5,368.1" fill="none" stroke="#0072bd" stroke-width="1.1" stroke-linejoin="round"/><path d="M624.2,635.5V796.5" stroke="#0072bd" stroke-width="2"/><path d="M628.1,635.5V796.5" stroke="#0072bd" stroke-width="1.6"/><path d="M631.5,635.5V796.5" stroke="#0072bd" stroke-width="1.6"/><path d="M623.5,796.5L632.5,796.5" stroke="#0072bd" stroke-width="1.5"/><path d="M632.5,796.5 C633.3,777.8 633.7,754.0 635.0,740.3 C635.8,732.4 636.9,724.4 637.8,721.6 C638.1,720.7 638.3,720.0 638.6,720.0 C638.9,720.0 639.1,722.0 639.4,722.0 C639.7,722.0 640.0,719.5 640.3,719.5 C640.6,719.5 640.9,721.0 641.2,721.0 C641.6,721.0 642.0,719.2 642.4,719.2 C642.8,719.2 643.1,720.8 643.5,720.8 C643.9,720.8 644.2,719.6 644.6,719.6 C645.0,719.6 645.4,720.9 645.8,720.9 C646.2,720.9 646.6,719.8 647.0,719.8 C647.4,719.8 647.6,720.9 648.0,721.0 C648.4,721.1 648.9,720.2 649.3,720.2 C649.7,720.2 650.1,721.3 650.5,721.3 C650.9,721.3 651.3,720.5 651.8,720.5 C652.4,720.5 653.0,721.1 653.6,721.9 C654.6,723.3 655.7,725.8 656.4,729.1 C657.9,735.8 657.6,750.6 658.3,760.8 C658.9,770.5 658.1,783.0 660.2,788.9 C661.3,792.1 662.6,794.1 664.9,795.4 C667.6,796.9 671.9,796.2 676.0,796.4 C681.0,796.6 687.6,796.3 692.9,796.4 C697.5,796.5 701.6,796.6 706.0,796.7" fill="none" stroke="#0072bd" stroke-width="1.1"/><rect x="706.2" y="635.5" width="1.7" height="161.5" fill="#5aa0d6"/><rect x="710.8" y="635.5" width="2.3" height="161.5" fill="#0072bd"/><rect x="713.1" y="635.5" width="1.5" height="161.5" fill="#4d98d2"/><rect x="714.6" y="635.5" width="1.2" height="161.5" fill="#0072bd"/><rect x="715.8" y="635.5" width="0.8" height="161.5" fill="#4d98d2"/><rect x="716.6" y="635.5" width="1.3" height="161.5" fill="#0072bd"/><rect x="719.9" y="635.5" width="3.2" height="161.5" fill="#0072bd"/><rect x="723.1" y="635.5" width="1.9" height="161.5" fill="#4d98d2"/><rect x="725" y="635.5" width="1.2" height="161.5" fill="#0072bd"/><rect x="729.1" y="635.5" width="7.9" height="161.5" fill="#0072bd"/><rect x="737" y="635.5" width="1.1" height="161.5" fill="#4d98d2"/><rect x="738.1" y="635.5" width="5.8" height="161.5" fill="#0072bd"/><rect x="743.9" y="635.5" width="1.2" height="161.5" fill="#4d98d2"/><rect x="745.1" y="635.5" width="1.9" height="161.5" fill="#0072bd"/><path d="M706,796.7H747" stroke="#0072bd" stroke-width="1.1"/><path d="M747.0,797.0 C755.9,796.8 767.2,798.3 773.6,796.4 C777.7,795.2 780.7,793.5 783.0,790.7 C785.6,787.5 786.5,782.4 787.7,777.7 C789.1,772.5 789.5,765.4 790.5,760.8 C791.2,757.5 791.9,752.4 792.7,752.4 C793.5,752.4 794.4,757.5 795.1,760.8 C796.1,765.4 796.5,772.5 797.9,777.7 C799.1,782.4 799.7,787.6 802.6,790.7 C805.4,793.8 810.7,795.4 814.8,796.4 C818.5,797.3 822.3,796.7 826.0,796.9" fill="none" stroke="#0072bd" stroke-width="1.1"/><path d="M828.8,635.0 C835.9,635.1 841.0,635.1 850.0,635.2 C865.9,635.4 893.7,635.8 915.6,636.2 C937.5,636.6 964.6,636.5 981.2,637.4 C991.4,637.9 998.5,638.4 1005.8,639.5 C1011.9,640.4 1017.8,641.3 1022.2,643.1 C1025.5,644.4 1027.9,645.6 1030.4,648.0 C1033.6,651.1 1036.4,656.3 1038.6,661.2 C1041.0,666.6 1041.9,673.3 1043.6,679.2 C1045.2,684.8 1046.3,691.0 1048.5,695.6 C1050.3,699.5 1052.2,703.2 1055.0,705.5 C1057.7,707.7 1061.9,709.8 1064.9,709.6 C1067.6,709.4 1069.9,705.4 1072.3,705.5 C1074.8,705.6 1077.1,709.2 1079.7,710.4 C1082.3,711.6 1084.5,712.2 1087.9,712.8 C1093.4,713.8 1100.2,714.0 1110.0,714.5 C1129.3,715.5 1174.9,715.6 1195.9,716.4 C1208.1,716.9 1216.1,716.5 1224.7,717.9 C1231.8,719.1 1237.9,720.6 1243.9,723.2 C1249.8,725.7 1256.6,731.8 1260.6,733.2 C1262.6,733.9 1264.0,733.1 1265.4,733.9 C1266.9,734.8 1268.0,736.8 1269.0,738.7 C1270.3,741.1 1270.8,747.5 1272.1,747.6 C1273.5,747.7 1274.8,741.0 1277.4,737.5 C1280.8,732.9 1285.8,726.4 1291.8,723.2 C1298.4,719.7 1307.7,719.5 1315.8,718.4 C1324.1,717.2 1336.5,720.2 1341.0,716.4 C1344.4,713.5 1343.3,702.1 1344.5,702.1 C1345.7,702.1 1346.1,714.3 1348.1,716.0 C1349.2,716.9 1350.3,716.2 1352.0,716.3 C1355.1,716.4 1360.1,716.3 1365.0,716.3 C1371.5,716.3 1380.6,716.4 1387.7,716.6 C1393.9,716.8 1399.1,717.0 1405.0,717.5 C1411.1,718.0 1417.1,718.3 1423.7,719.6 C1431.2,721.1 1440.1,723.5 1447.6,726.8 C1454.9,730.0 1462.8,737.3 1468.0,738.7 C1470.9,739.5 1472.8,738.7 1475.2,738.7" fill="none" stroke="#0072bd" stroke-width="1.1"/><rect x="826" y="635.5" width="2.6" height="161.5" fill="#0072bd"/><path d="M623.5,132L623.5,631" stroke="#262626" stroke-width="1"/><path d="M623,630.5L1476,630.5" stroke="#262626" stroke-width="1"/><path d="M623.5,635L623.5,797.5" stroke="#262626" stroke-width="1"/><path d="M623,797.5L1476,797.5" stroke="#262626" stroke-width="1"/><path d="M623.5,610.5L627.5,610.5" stroke="#262626" stroke-width="1"/><path d="M623.5,586.5L627.5,586.5" stroke="#262626" stroke-width="1"/><path d="M623.5,568.5L627.5,568.5" stroke="#262626" stroke-width="1"/><path d="M623.5,555.5L627.5,555.5" stroke="#262626" stroke-width="1"/><path d="M623.5,544.5L627.5,544.5" stroke="#262626" stroke-width="1"/><path d="M623.5,535.5L627.5,535.5" stroke="#262626" stroke-width="1"/><path d="M623.5,527.5L627.5,527.5" stroke="#262626" stroke-width="1"/><path d="M623.5,519.5L627.5,519.5" stroke="#262626" stroke-width="1"/><path d="M623.5,513.5L631.5,513.5" stroke="#262626" stroke-width="1"/><path d="M623.5,471.5L627.5,471.5" stroke="#262626" stroke-width="1"/><path d="M623.5,447.5L627.5,447.5" stroke="#262626" stroke-width="1"/><path d="M623.5,430.5L627.5,430.5" stroke="#262626" stroke-width="1"/><path d="M623.5,416.5L627.5,416.5" stroke="#262626" stroke-width="1"/><path d="M623.5,405.5L627.5,405.5" stroke="#262626" stroke-width="1"/><path d="M623.5,396.5L627.5,396.5" stroke="#262626" stroke-width="1"/><path d="M623.5,388.5L627.5,388.5" stroke="#262626" stroke-width="1"/><path d="M623.5,381.5L627.5,381.5" stroke="#262626" stroke-width="1"/><path d="M623.5,375.5L631.5,375.5" stroke="#262626" stroke-width="1"/><path d="M623.5,333.5L627.5,333.5" stroke="#262626" stroke-width="1"/><path d="M623.5,309.5L627.5,309.5" stroke="#262626" stroke-width="1"/><path d="M623.5,291.5L627.5,291.5" stroke="#262626" stroke-width="1"/><path d="M623.5,278.5L627.5,278.5" stroke="#262626" stroke-width="1"/><path d="M623.5,267.5L627.5,267.5" stroke="#262626" stroke-width="1"/><path d="M623.5,258.5L627.5,258.5" stroke="#262626" stroke-width="1"/><path d="M623.5,250.5L627.5,250.5" stroke="#262626" stroke-width="1"/><path d="M623.5,242.5L627.5,242.5" stroke="#262626" stroke-width="1"/><path d="M623.5,236.5L631.5,236.5" stroke="#262626" stroke-width="1"/><path d="M623.5,194.5L627.5,194.5" stroke="#262626" stroke-width="1"/><path d="M623.5,170.5L627.5,170.5" stroke="#262626" stroke-width="1"/><path d="M623.5,153.5L627.5,153.5" stroke="#262626" stroke-width="1"/><path d="M623.5,139.5L627.5,139.5" stroke="#262626" stroke-width="1"/><path d="M706.5,630.5L706.5,622.5" stroke="#262626" stroke-width="1"/><path d="M706.5,797.5L706.5,790" stroke="#262626" stroke-width="1"/><path d="M846.5,630.5L846.5,622.5" stroke="#262626" stroke-width="1"/><path d="M846.5,797.5L846.5,790" stroke="#262626" stroke-width="1"/><path d="M986.5,630.5L986.5,622.5" stroke="#262626" stroke-width="1"/><path d="M986.5,797.5L986.5,790" stroke="#262626" stroke-width="1"/><path d="M1126.5,630.5L1126.5,622.5" stroke="#262626" stroke-width="1"/><path d="M1126.5,797.5L1126.5,790" stroke="#262626" stroke-width="1"/><path d="M1266.5,630.5L1266.5,622.5" stroke="#262626" stroke-width="1"/><path d="M1266.5,797.5L1266.5,790" stroke="#262626" stroke-width="1"/><path d="M1406.5,630.5L1406.5,622.5" stroke="#262626" stroke-width="1"/><path d="M1406.5,797.5L1406.5,790" stroke="#262626" stroke-width="1"/><path d="M623.5,671.5L631.5,671.5" stroke="#262626" stroke-width="1"/><path d="M623.5,716.5L631.5,716.5" stroke="#262626" stroke-width="1"/><path d="M623.5,761.5L631.5,761.5" stroke="#262626" stroke-width="1"/><text x="611" y="242.7" font-size="13" text-anchor="end" font-family="Liberation Sans" fill="#262626">10</text><text x="612" y="236.9" font-size="10.5" font-family="Liberation Sans" fill="#262626">1</text><text x="611" y="382" font-size="13" text-anchor="end" font-family="Liberation Sans" fill="#262626">10</text><text x="612" y="376.2" font-size="10.5" font-family="Liberation Sans" fill="#262626">0</text><text x="607.3" y="520.9" font-size="13" text-anchor="end" font-family="Liberation Sans" fill="#262626">10</text><rect x="608" y="511.6" width="3.2" height="1.2" fill="#262626"/><text x="611.6" y="515" font-size="10.5" font-family="Liberation Sans" fill="#262626">1</text><text x="618" y="675.7" font-size="11.5" text-anchor="end" font-family="Liberation Sans" fill="#262626">100</text><text x="618" y="720.7" font-size="11.5" text-anchor="end" font-family="Liberation Sans" fill="#262626">0</text><text x="618" y="765.7" font-size="11.5" text-anchor="end" font-family="Liberation Sans" fill="#262626">-100</text><text x="706.5" y="814.8" font-size="11.5" text-anchor="middle" font-family="Liberation Sans" fill="#262626">10</text><text x="846.5" y="814.8" font-size="11.5" text-anchor="middle" font-family="Liberation Sans" fill="#262626">20</text><text x="986.5" y="814.8" font-size="11.5" text-anchor="middle" font-family="Liberation Sans" fill="#262626">30</text><text x="1126.5" y="814.8" font-size="11.5" text-anchor="middle" font-family="Liberation Sans" fill="#262626">40</text><text x="1266.5" y="814.8" font-size="11.5" text-anchor="middle" font-family="Liberation Sans" fill="#262626">50</text><text x="1406.5" y="814.8" font-size="11.5" text-anchor="middle" font-family="Liberation Sans" fill="#262626">60</text><text x="1050.3" y="830.3" font-size="11" text-anchor="middle" font-family="Liberation Sans" fill="#262626">Frequency [Hz]</text><text transform="translate(588,421.9) rotate(-90)" font-size="12" textLength="81" lengthAdjust="spacingAndGlyphs" font-family="Liberation Sans" fill="#262626">|Acc| [m/s2/N]</text><text transform="translate(589,754.1) rotate(-90)" font-size="11.2" textLength="76.4" lengthAdjust="spacingAndGlyphs" font-family="Liberation Sans" fill="#262626">phase (w) [deg]</text><text x="1362.3" y="146" font-size="13.5" letter-spacing="0.1" textLength="110" lengthAdjust="spacing" font-family="Liberation Sans" fill="#0072bd">Test 1011z 1012-z</text></svg>
<div class="a" style="left:1029px;top:889px;width:3px;height:3px;background:#000"></div>
<svg class="a" style="left:0;top:899px" width="10" height="10"><path d="M0,0Q1,9 10,10H0Z" fill="#9a9a9a"/></svg>
<svg class="a" style="left:1572px;top:896px" width="13" height="13"><g fill="#aaa794"><rect x="9" y="1" width="2" height="2"/><rect x="5" y="5" width="2" height="2"/><rect x="9" y="5" width="2" height="2"/><rect x="1" y="9" width="2" height="2"/><rect x="5" y="9" width="2" height="2"/><rect x="9" y="9" width="2" height="2"/></g><g fill="#fff"><rect x="10" y="2" width="1" height="1"/><rect x="6" y="6" width="1" height="1"/><rect x="10" y="6" width="1" height="1"/><rect x="2" y="10" width="1" height="1"/><rect x="6" y="10" width="1" height="1"/><rect x="10" y="10" width="1" height="1"/></g></svg>
</body></html>
